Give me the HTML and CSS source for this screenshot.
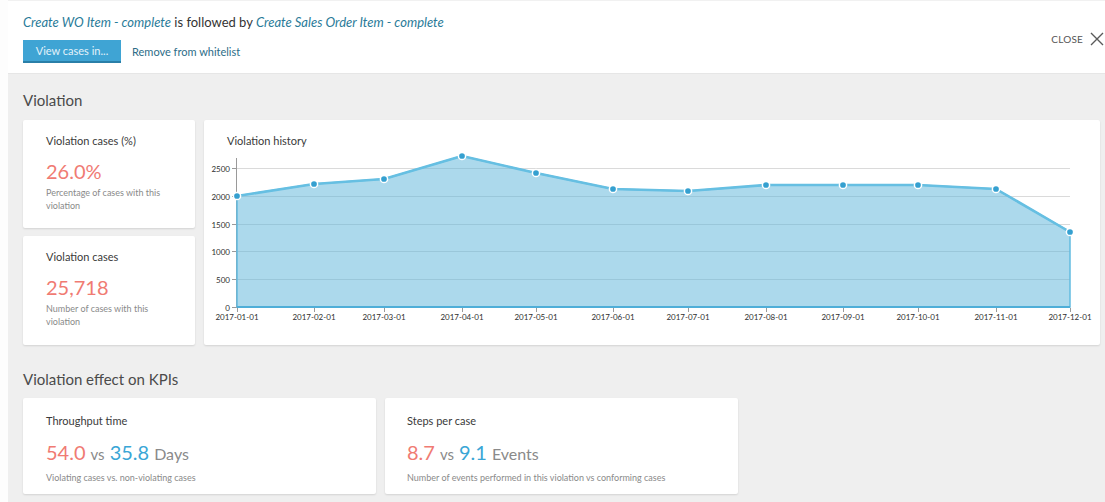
FILE: index.html
```html
<!DOCTYPE html>
<html lang="en">
<head>
<meta charset="utf-8">
<title>Violation details</title>
<link rel="stylesheet" href="styles.css">
</head>
<body>
<div class="backdrop">
  <div class="modal">
    <header class="modal-head">
      <div class="head-main">
        <div class="rule-title">
          <a class="activity" href="#">Create WO Item - complete</a>
          <span class="rel">is followed by</span>
          <a class="activity" href="#">Create Sales Order Item - complete</a>
        </div>
        <div class="actions">
          <button class="btn-primary" type="button">View cases in...</button>
          <a class="link-action" href="#">Remove from whitelist</a>
        </div>
      </div>
      <button class="close-btn" type="button">
        <span>CLOSE</span>
        <svg width="14" height="14" viewBox="0 0 14 14" aria-hidden="true">
          <path d="M1 1 L13 13 M13 1 L1 13" stroke="#5a5a5a" stroke-width="1.4" fill="none"/>
        </svg>
      </button>
    </header>

    <main class="panel">
      <h2 class="section-title">Violation</h2>
      <div class="violation-grid">
        <section class="card stat-card">
          <h3 class="card-title">Violation cases (%)</h3>
          <div class="stat-value">26.0%</div>
          <p class="card-desc">Percentage of cases with this violation</p>
        </section>
        <section class="card chart-card">
          <h3 class="card-title chart-title">Violation history</h3>
          <svg class="chart" width="896" height="197" viewBox="0 0 896 197">
            <!-- grid lines -->
            <g stroke="#dadada" stroke-width="1">
              <line x1="33" y1="20.5" x2="866" y2="20.5"/>
              <line x1="33" y1="48.5" x2="866" y2="48.5"/>
              <line x1="33" y1="76.5" x2="866" y2="76.5"/>
              <line x1="33" y1="103.5" x2="866" y2="103.5"/>
              <line x1="33" y1="131.5" x2="866" y2="131.5"/>
            </g>
            <!-- y axis -->
            <line x1="32.5" y1="10" x2="32.5" y2="159" stroke="#9a9a9a" stroke-width="1"/>
            <g stroke="#9a9a9a" stroke-width="1">
              <line x1="28" y1="20.5" x2="33" y2="20.5"/>
              <line x1="28" y1="48.5" x2="33" y2="48.5"/>
              <line x1="28" y1="76.5" x2="33" y2="76.5"/>
              <line x1="28" y1="103.5" x2="33" y2="103.5"/>
              <line x1="28" y1="131.5" x2="33" y2="131.5"/>
              <line x1="28" y1="159.5" x2="33" y2="159.5"/>
            </g>
            <g class="tick-y" text-anchor="end">
              <text x="26" y="23.5">2500</text>
              <text x="26" y="51.5">2000</text>
              <text x="26" y="79.5">1500</text>
              <text x="26" y="106.5">1000</text>
              <text x="26" y="134.5">500</text>
              <text x="26" y="162.5">0</text>
            </g>
            <!-- area -->
            <polygon points="33,48 110,36 180,31 258,8 332,25 409,41 484,43 562,37 639,37 714,37 792,41 866,84 866,159 33,159"
                     fill="#59b3d9" fill-opacity="0.5" stroke="#62bbe0" stroke-width="1.5"/>
            <line x1="33" y1="159" x2="866" y2="159" stroke="#4eaed8" stroke-width="2"/>
            <polyline points="33,48 110,36 180,31 258,8 332,25 409,41 484,43 562,37 639,37 714,37 792,41 866,84"
                      fill="none" stroke="#66bfe2" stroke-width="2.6" stroke-linejoin="round"/>
            <g fill="#35a0d0" stroke="#ffffff" stroke-width="1.5">
              <circle cx="33" cy="48" r="3.6"/>
              <circle cx="110" cy="36" r="3.6"/>
              <circle cx="180" cy="31" r="3.6"/>
              <circle cx="258" cy="8" r="3.6"/>
              <circle cx="332" cy="25" r="3.6"/>
              <circle cx="409" cy="41" r="3.6"/>
              <circle cx="484" cy="43" r="3.6"/>
              <circle cx="562" cy="37" r="3.6"/>
              <circle cx="639" cy="37" r="3.6"/>
              <circle cx="714" cy="37" r="3.6"/>
              <circle cx="792" cy="41" r="3.6"/>
              <circle cx="866" cy="84" r="3.6"/>
            </g>
            <!-- x axis ticks -->
            <g stroke="#9a9a9a" stroke-width="1">
              <line x1="33.5" y1="160" x2="33.5" y2="164"/>
              <line x1="110.5" y1="160" x2="110.5" y2="164"/>
              <line x1="180.5" y1="160" x2="180.5" y2="164"/>
              <line x1="258.5" y1="160" x2="258.5" y2="164"/>
              <line x1="332.5" y1="160" x2="332.5" y2="164"/>
              <line x1="409.5" y1="160" x2="409.5" y2="164"/>
              <line x1="484.5" y1="160" x2="484.5" y2="164"/>
              <line x1="562.5" y1="160" x2="562.5" y2="164"/>
              <line x1="639.5" y1="160" x2="639.5" y2="164"/>
              <line x1="714.5" y1="160" x2="714.5" y2="164"/>
              <line x1="792.5" y1="160" x2="792.5" y2="164"/>
              <line x1="866.5" y1="160" x2="866.5" y2="164"/>
            </g>
            <g class="tick-x" text-anchor="middle">
              <text x="33" y="172">2017-01-01</text>
              <text x="110" y="172">2017-02-01</text>
              <text x="180" y="172">2017-03-01</text>
              <text x="258" y="172">2017-04-01</text>
              <text x="332" y="172">2017-05-01</text>
              <text x="409" y="172">2017-06-01</text>
              <text x="484" y="172">2017-07-01</text>
              <text x="562" y="172">2017-08-01</text>
              <text x="639" y="172">2017-09-01</text>
              <text x="714" y="172">2017-10-01</text>
              <text x="792" y="172">2017-11-01</text>
              <text x="866" y="172">2017-12-01</text>
            </g>
          </svg>
        </section>
        <section class="card stat-card">
          <h3 class="card-title">Violation cases</h3>
          <div class="stat-value">25,718</div>
          <p class="card-desc">Number of cases with this violation</p>
        </section>
      </div>

      <h2 class="section-title kpi-title">Violation effect on KPIs</h2>
      <div class="kpi-grid">
        <section class="card kpi-card">
          <h3 class="card-title">Throughput time</h3>
          <div class="kpi-value">
            <span class="num bad">54.0</span>
            <span class="vs">vs</span>
            <span class="num good">35.8</span>
            <span class="unit">Days</span>
          </div>
          <p class="card-desc">Violating cases vs. non-violating cases</p>
        </section>
        <section class="card kpi-card kpi-card-2">
          <h3 class="card-title">Steps per case</h3>
          <div class="kpi-value">
            <span class="num bad">8.7</span>
            <span class="vs">vs</span>
            <span class="num good">9.1</span>
            <span class="unit">Events</span>
          </div>
          <p class="card-desc">Number of events performed in this violation vs conforming cases</p>
        </section>
      </div>
    </main>
  </div>
</div>
</body>
</html>
```

FILE: styles.css
```css
* {
  box-sizing: border-box;
}

html, body {
  margin: 0;
  height: 100%;
}

body {
  font-family: "Lato", "Noto Sans", sans-serif;
  color: #3d3d3d;
  background: #fdfdfd;
  overflow: hidden;
}

.backdrop {
  display: flex;
  height: 100%;
}

.modal {
  flex: 1;
  margin-left: 8px;
  display: flex;
  flex-direction: column;
  background: #ffffff;
  border-top: 1px solid #f1f1f1;
  min-width: 0;
}

/* header */
.modal-head {
  display: flex;
  justify-content: space-between;
  align-items: center;
  padding: 13px 1px 10px 15px;
}

.rule-title {
  font-size: 13px;
  line-height: 16px;
  color: #333;
}

.activity {
  color: #2a7b99;
  font-style: italic;
  text-decoration: none;
}

.actions {
  display: flex;
  align-items: center;
  gap: 11px;
  margin-top: 10px;
}

.btn-primary {
  height: 23px;
  width: 98px;
  padding: 0;
  border: 0;
  border-bottom: 2px solid #2a7fa8;
  background: #3fa4d4;
  color: #e3f2fa;
  font-family: inherit;
  font-size: 11px;
}

.link-action {
  color: #2d6d88;
  font-size: 11px;
  text-decoration: none;
}

.close-btn {
  display: flex;
  align-items: center;
  gap: 7px;
  background: none;
  border: 0;
  padding: 0;
  font-family: inherit;
  font-size: 10px;
  color: #555;
  letter-spacing: 0.2px;
}

/* grey content panel */
.panel {
  flex: 1;
  background: #efefef;
  border-top: 1px solid #e6e6e6;
  padding: 17px 5px 0 15px;
}

.section-title {
  margin: 0;
  font-size: 15px;
  line-height: 18px;
  font-weight: 400;
  color: #4a4a4a;
}

.violation-grid {
  display: grid;
  grid-template-columns: 172px 1fr;
  grid-template-rows: 108px 109px;
  gap: 8px 9px;
  margin-top: 11px;
}

.card {
  background: #fff;
  border-radius: 2px;
  box-shadow: 0 1px 2px rgba(0, 0, 0, 0.12);
}

.stat-card {
  padding: 14px 12px 0 23px;
}

.card-title {
  margin: 0;
  font-size: 11px;
  line-height: 14px;
  font-weight: 400;
  color: #3a3a3a;
}

.stat-value {
  margin-top: 11px;
  font-size: 20px;
  line-height: 24px;
  color: #f07b73;
}

.card-desc {
  margin: 3px 0 0;
  font-size: 9px;
  line-height: 13px;
  color: #8a8a8a;
}

.chart-card {
  grid-column: 2;
  grid-row: 1 / span 2;
  display: flex;
  flex-direction: column;
  overflow: hidden;
}

.chart-title {
  padding: 14px 0 0 23px;
}

.chart {
  display: block;
  flex-shrink: 0;
}

.tick-y text,
.tick-x text {
  font-family: "Lato", "Noto Sans", sans-serif;
  font-size: 8px;
  fill: #2f2f2f;
}

.kpi-title {
  margin-top: 25px;
}

.kpi-grid {
  display: grid;
  grid-template-columns: repeat(3, 1fr);
  gap: 9px;
  margin-top: 10px;
}

.kpi-card {
  height: 96px;
  padding: 16px 12px 0 23px;
}

.kpi-card-2 {
  padding-left: 22px;
}

.kpi-value {
  margin-top: 11px;
  line-height: 26px;
  display: flex;
  align-items: baseline;
  gap: 5px;
  color: #8a8a8a;
}

.num {
  font-size: 20px;
}

.num.bad {
  color: #f07b73;
}

.num.good {
  color: #3aa6d6;
}

.vs {
  font-size: 15px;
}

.unit {
  font-size: 16px;
}

.kpi-card .card-desc {
  margin-top: 4px;
}
```
